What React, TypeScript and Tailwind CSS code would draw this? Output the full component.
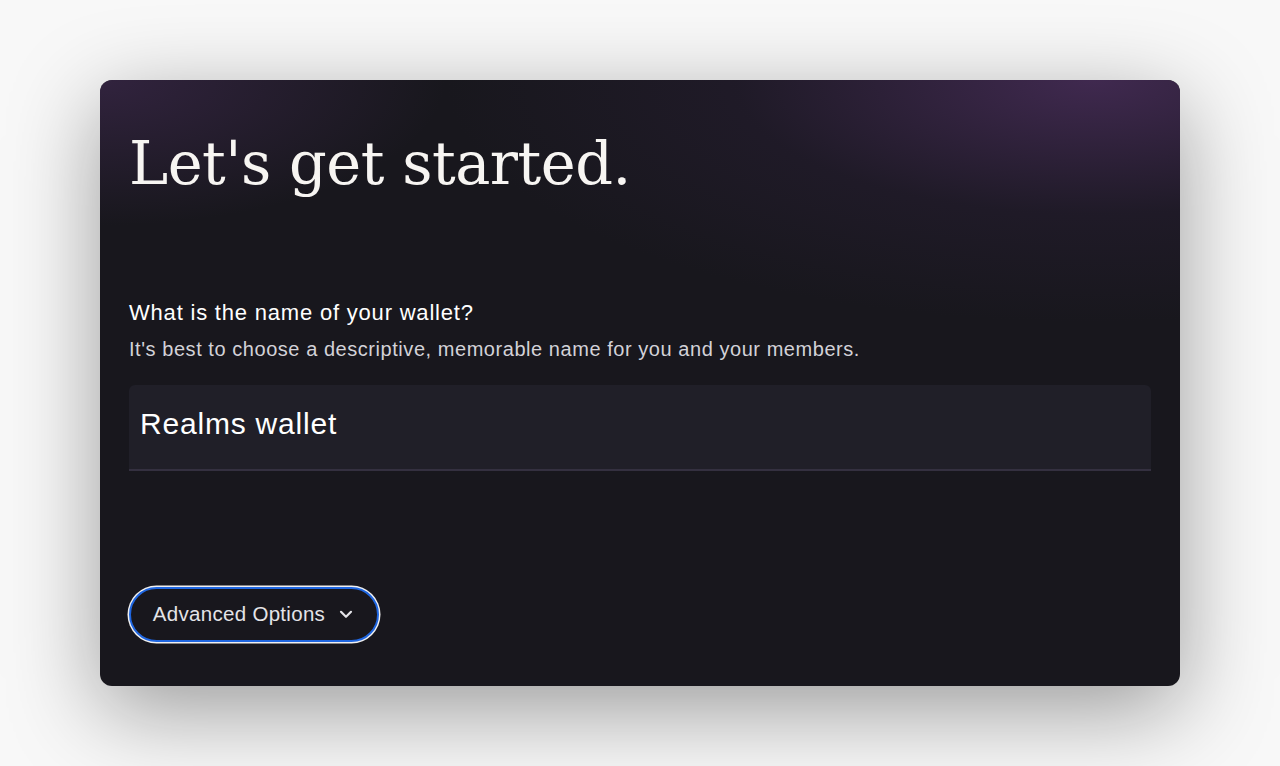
import React from "react";

export default function App() {
  return (
    <div className="min-h-[766px] w-full bg-[#f8f8f8] pt-[80px] px-[100px] font-['Liberation_Sans',Arial,sans-serif]">
      <div className="relative h-[606px] w-[1080px] overflow-hidden rounded-[12px] bg-[#18171d] shadow-[0_24px_90px_rgba(0,0,0,0.38)]">
        <div className="pointer-events-none absolute inset-0 bg-[radial-gradient(60%_40%_at_92%_0%,rgba(66,42,82,0.95),rgba(40,30,52,0.45)_55%,transparent_100%),radial-gradient(40%_30%_at_0%_0%,rgba(60,40,76,0.7),transparent_80%)]" />
        <div className="relative flex h-full flex-col px-[29px]">
          <h1 className="mt-[46px] font-['DejaVu_Serif','Liberation_Serif',serif] text-[59px] leading-[76px] text-[#f7f5f2] tracking-[-0.5px]">
            Let's get started.
          </h1>
          <div className="mt-[97px] text-[22px] leading-[28px] tracking-[0.8px] text-white">
            What is the name of your wallet?
          </div>
          <div className="mt-[10px] text-[20px] leading-[24px] tracking-[0.55px] text-[#d3d2d8]">
            It's best to choose a descriptive, memorable name for you and your members.
          </div>
          <div className="mt-[24px] flex h-[86px] items-center rounded-t-[6px] border-b-2 border-[#343040] bg-[#201f28] px-[11px] pb-[8px]">
            <span className="text-[30px] tracking-[0.8px] text-white">Realms wallet</span>
          </div>
          <div className="mt-[116px]">
            <button className="flex h-[55px] w-[250px] items-center justify-center gap-[14px] rounded-full border-2 border-[#1f66e0] bg-[#18171d] pr-[2px] text-[20.5px] tracking-[0.3px] text-[#e4e4e8] shadow-[0_0_0_1.5px_#f0f0f0]">
              <span>Advanced Options</span>
              <svg width="14" height="9" viewBox="0 0 14 9" fill="none" stroke="currentColor" strokeWidth="2.2" strokeLinecap="round" strokeLinejoin="round">
                <path d="M2 1.8L7 6.8L12 1.8" />
              </svg>
            </button>
          </div>
        </div>
      </div>
    </div>
  );
}
